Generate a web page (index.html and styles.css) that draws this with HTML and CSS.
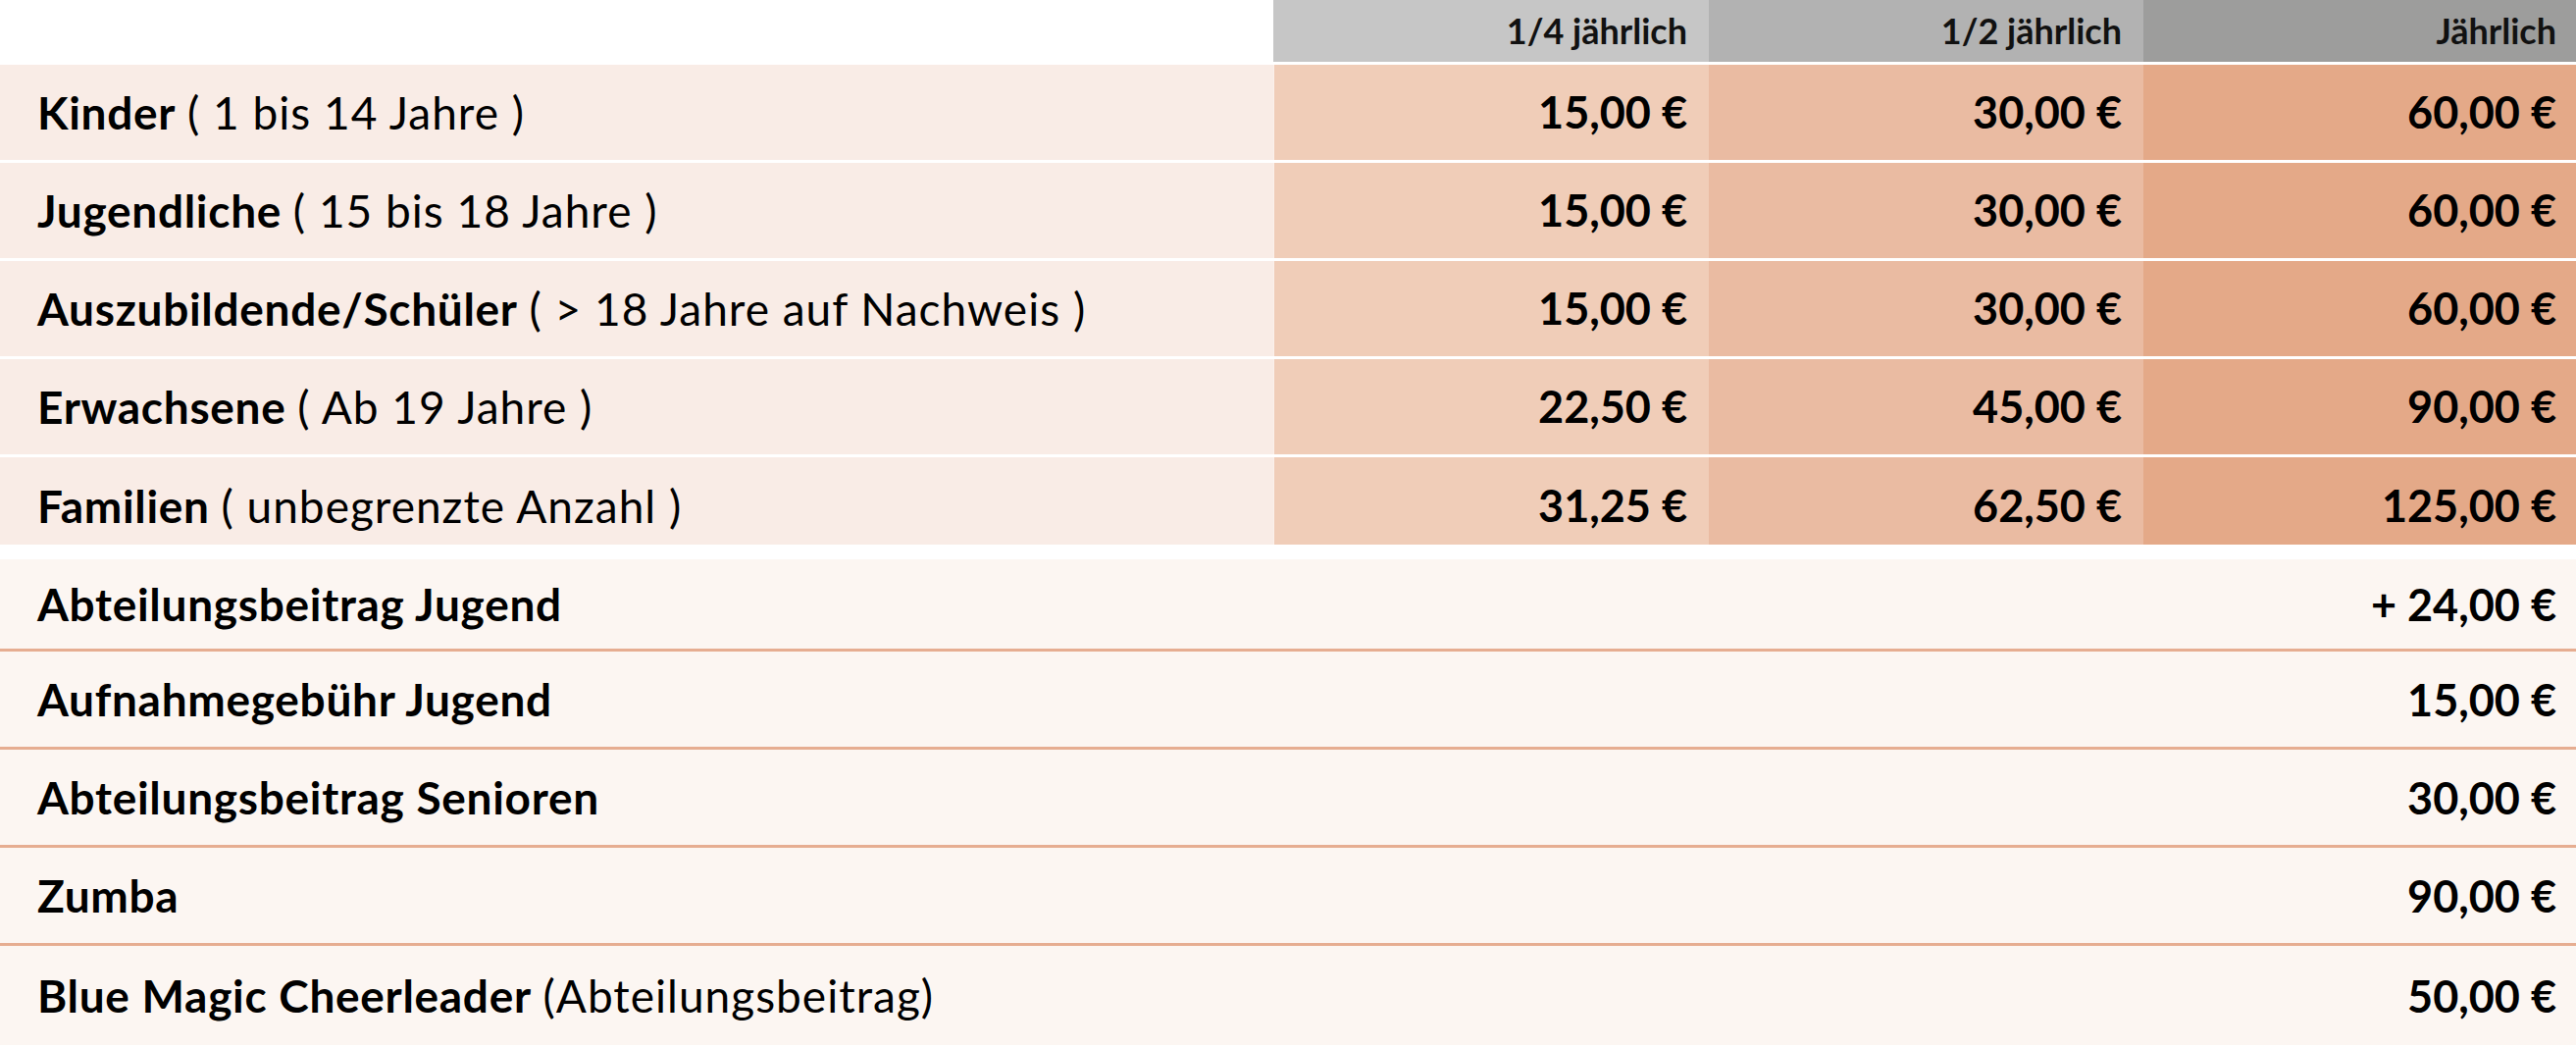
FILE: index.html
```html
<!DOCTYPE html>
<html lang="de">
<head>
<meta charset="utf-8">
<title>Beiträge</title>
<link rel="stylesheet" href="styles.css">
</head>
<body>
<div class="page">
  <table class="fees">
    <colgroup>
      <col class="c-label">
      <col class="c-q">
      <col class="c-h">
      <col class="c-y">
    </colgroup>
    <thead>
      <tr class="head">
        <th class="blank"></th>
        <th class="q">1/4 jährlich</th>
        <th class="h">1/2 jährlich</th>
        <th class="y">Jährlich</th>
      </tr>
    </thead>
    <tbody>
      <tr class="row">
        <td class="label"><b>Kinder</b> <span class="note">( 1 bis 14 Jahre )</span></td>
        <td class="q">15,00 €</td>
        <td class="h">30,00 €</td>
        <td class="y">60,00 €</td>
      </tr>
      <tr class="row">
        <td class="label"><b>Jugendliche</b> <span class="note">( 15 bis 18 Jahre )</span></td>
        <td class="q">15,00 €</td>
        <td class="h">30,00 €</td>
        <td class="y">60,00 €</td>
      </tr>
      <tr class="row">
        <td class="label"><b>Auszubildende/Schüler</b> <span class="note">( &gt; 18 Jahre auf Nachweis )</span></td>
        <td class="q">15,00 €</td>
        <td class="h">30,00 €</td>
        <td class="y">60,00 €</td>
      </tr>
      <tr class="row">
        <td class="label"><b>Erwachsene</b> <span class="note">( Ab 19 Jahre )</span></td>
        <td class="q">22,50 €</td>
        <td class="h">45,00 €</td>
        <td class="y">90,00 €</td>
      </tr>
      <tr class="row last">
        <td class="label"><b>Familien</b> <span class="note">( unbegrenzte Anzahl )</span></td>
        <td class="q">31,25 €</td>
        <td class="h">62,50 €</td>
        <td class="y">125,00 €</td>
      </tr>
    </tbody>
  </table>

  <div class="extras">
    <div class="extra first">
      <span class="name"><b>Abteilungsbeitrag Jugend</b></span>
      <span class="price">+ 24,00 €</span>
    </div>
    <div class="extra">
      <span class="name"><b>Aufnahmegebühr Jugend</b></span>
      <span class="price">15,00 €</span>
    </div>
    <div class="extra">
      <span class="name"><b>Abteilungsbeitrag Senioren</b></span>
      <span class="price">30,00 €</span>
    </div>
    <div class="extra">
      <span class="name"><b>Zumba</b></span>
      <span class="price">90,00 €</span>
    </div>
    <div class="extra">
      <span class="name"><b>Blue Magic Cheerleader</b> <span class="note">(Abteilungsbeitrag)</span></span>
      <span class="price">50,00 €</span>
    </div>
  </div>
</div>
</body>
</html>
```

FILE: styles.css
```css
* { box-sizing: border-box; }

html, body {
  margin: 0;
  padding: 0;
  background: #ffffff;
}

body {
  font-family: Lato, "Open Sans", "Liberation Sans", sans-serif;
  color: #000000;
  overflow: hidden;
}

.page {
  width: 2626px;
}

.fees {
  width: 2626px;
  border-collapse: collapse;
  table-layout: fixed;
}

.c-label { width: 1298px; }
.c-q { width: 444px; }
.c-h { width: 443px; }
.c-y { width: 441px; }

.fees th,
.fees td {
  padding: 0 22px 0 0;
  text-align: right;
  vertical-align: middle;
}

.head th {
  height: 64px;
  font-size: 36px;
  font-weight: 700;
  color: #111111;
  border-bottom: 3px solid #ffffff;
}

.head .blank { background: #ffffff; }
.head .q { background: #c6c6c6; }
.head .h { background: #b2b2b2; }
.head .y { background: #9d9d9c; padding-right: 20px; }

.row td {
  height: 100px;
  border-bottom: 3px solid #ffffff;
  font-size: 45px;
  font-weight: 700;
}

.row.last td {
  height: 91px;
  border-bottom: 0;
  padding-top: 10px;
}

.row .label {
  background: #f9ece6;
  text-align: left;
  padding-left: 38px;
  font-size: 46px;
  font-weight: 400;
  border-right: 1px solid rgba(255, 255, 255, 0.7);
}

b {
  font-weight: 700;
  letter-spacing: 0.7px;
}

.note {
  font-weight: 400;
  letter-spacing: 1px;
}

.row .q { background: #f0cdb8; }
.row .h { background: #eabba2; }
.row .y { background: #e4a988; padding-right: 20px; }

.extras {
  margin-top: 15px;
}

.extra {
  display: flex;
  align-items: center;
  justify-content: space-between;
  height: 100px;
  padding: 0 20px 0 38px;
  background: #fcf6f2;
  border-bottom: 3px solid #e6ad91;
  font-size: 45px;
}

.extra.first {
  height: 94px;
}

.extra:last-child {
  border-bottom: 0;
  height: 101px;
}

.extra .name {
  font-size: 46px;
  font-weight: 400;
}

.extra .price { font-weight: 700; }
```
